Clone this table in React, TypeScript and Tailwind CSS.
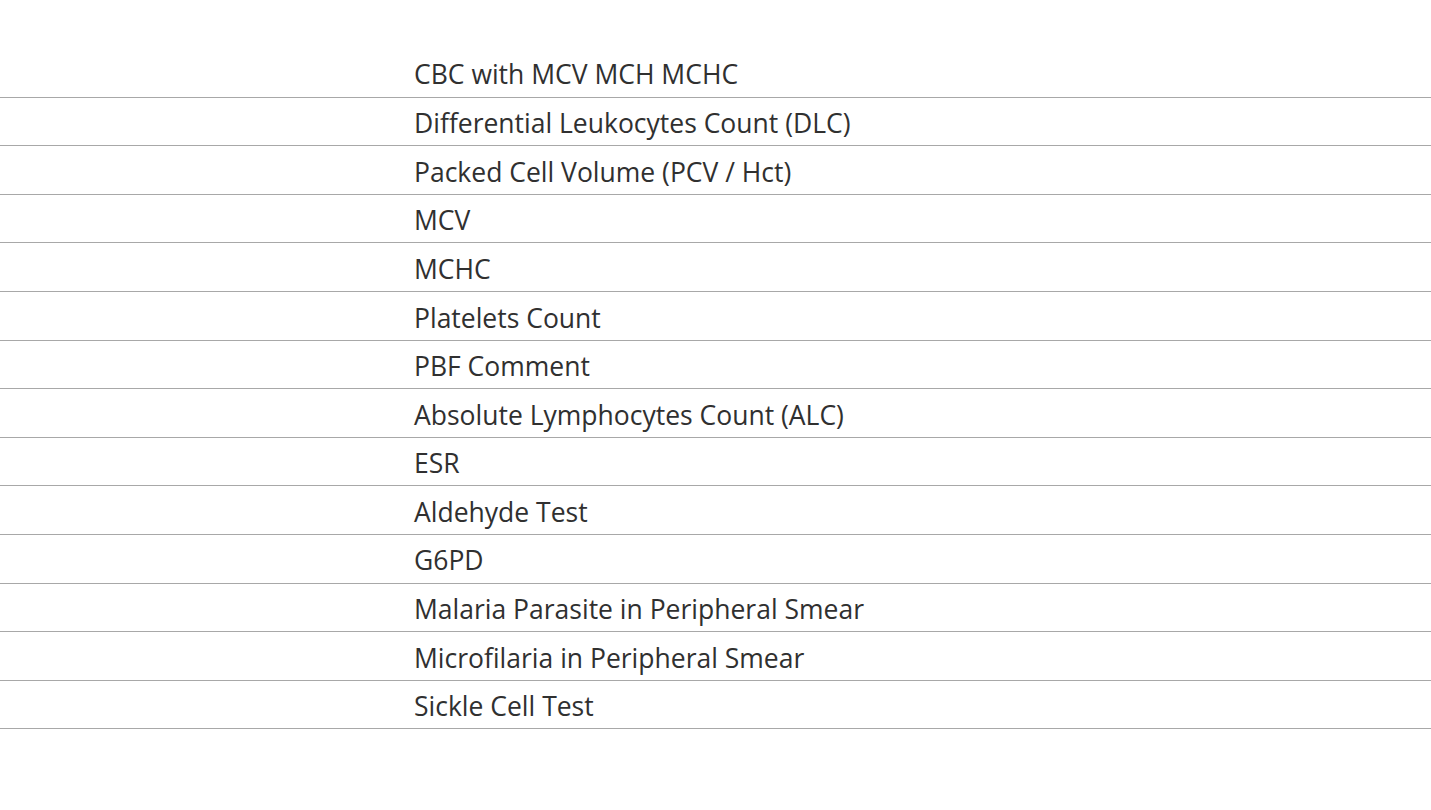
const tests = [
  'CBC with MCV MCH MCHC',
  'Differential Leukocytes Count (DLC)',
  'Packed Cell Volume (PCV / Hct)',
  'MCV',
  'MCHC',
  'Platelets Count',
  'PBF Comment',
  'Absolute Lymphocytes Count (ALC)',
  'ESR',
  'Aldehyde Test',
  'G6PD',
  'Malaria Parasite in Peripheral Smear',
  'Microfilaria in Peripheral Smear',
  'Sickle Cell Test',
]

export default function App() {
  return (
    <div className="min-h-screen bg-white pt-[48.5px] font-['Open_Sans',sans-serif] text-[#303030]">
      <table className="w-full border-collapse">
        <tbody>
          {tests.map((name) => (
            <tr key={name} className="h-[48.6px] border-b border-[#a8a8a8]">
              <td className="w-[406px]" />
              <td className="px-2 pt-[4px] align-middle text-[26.5px] leading-none">{name}</td>
            </tr>
          ))}
        </tbody>
      </table>
    </div>
  )
}
